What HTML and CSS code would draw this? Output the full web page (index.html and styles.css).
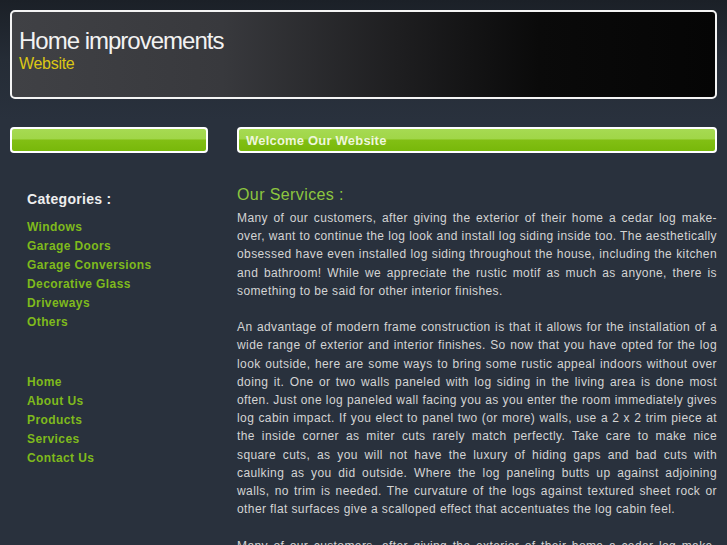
FILE: index.html
```
<!DOCTYPE html>
<html>
<head>
<meta charset="utf-8">
<link rel="stylesheet" href="styles.css">
</head>
<body>
<div class="page">
  <header class="header">
    <h1 class="title">Home improvements</h1>
    <div class="subtitle">Website</div>
  </header>
  <div class="columns">
    <aside class="sidebar">
      <div class="bar"></div>
      <h3 class="cat-title">Categories :</h3>
      <ul class="links">
        <li><a href="#">Windows</a></li>
        <li><a href="#">Garage Doors</a></li>
        <li><a href="#">Garage Conversions</a></li>
        <li><a href="#">Decorative Glass</a></li>
        <li><a href="#">Driveways</a></li>
        <li><a href="#">Others</a></li>
      </ul>
      <ul class="links nav">
        <li><a href="#">Home</a></li>
        <li><a href="#">About Us</a></li>
        <li><a href="#">Products</a></li>
        <li><a href="#">Services</a></li>
        <li><a href="#">Contact Us</a></li>
      </ul>
    </aside>
    <main class="main">
      <div class="bar"><span class="bar-text">Welcome Our Website</span></div>
      <h2 class="section-title">Our Services :</h2>
      <p>Many of our customers, after giving the exterior of their home a cedar log make-over, want to continue the log look and install log siding inside too. The aesthetically obsessed have even installed log siding throughout the house, including the kitchen and bathroom! While we appreciate the rustic motif as much as anyone, there is something to be said for other interior finishes.</p>
      <p>An advantage of modern frame construction is that it allows for the installation of a wide range of exterior and interior finishes. So now that you have opted for the log look outside, here are some ways to bring some rustic appeal indoors without over doing it. One or two walls paneled with log siding in the living area is done most often. Just one log paneled wall facing you as you enter the room immediately gives log cabin impact. If you elect to panel two (or more) walls, use a 2 x 2 trim piece at the inside corner as miter cuts rarely match perfectly. Take care to make nice square cuts, as you will not have the luxury of hiding gaps and bad cuts with caulking as you did outside. Where the log paneling butts up against adjoining walls, no trim is needed. The curvature of the logs against textured sheet rock or other flat surfaces give a scalloped effect that accentuates the log cabin feel.</p>
      <p>Many of our customers, after giving the exterior of their home a cedar log make-over, want to continue the log look and install log siding inside too. The aesthetically obsessed have even installed log siding throughout the house, including the kitchen and bathroom!</p>
    </main>
  </div>
</div>
</body>
</html>
```
FILE: styles.css
```
html, body {
  margin: 0;
  padding: 0;
}
body {
  background: linear-gradient(to bottom, #1b2027 0px, #252c36 60px, #29313d 120px, #29313d 100%);
  font-family: "Liberation Sans", Arial, sans-serif;
  color: #d2d2d2;
  height: 545px;
  overflow: hidden;
}
.page {
  padding: 10px 10px 0 10px;
}
.header {
  height: 85px;
  border: 2px solid #f4f4f4;
  border-radius: 5px;
  background: linear-gradient(to right, #404145 0%, #38393d 30%, #1e1e20 55%, #0a0a0a 75%, #050505 100%);
  padding: 0 0 0 7px;
  box-sizing: content-box;
}
.title {
  margin: 0;
  padding-top: 15px;
  font-size: 24px;
  font-weight: normal;
  letter-spacing: -1px;
  line-height: 28px;
  color: #f2f2f2;
}
.subtitle {
  font-size: 16px;
  line-height: 18px;
  color: #dcc715;
  letter-spacing: -0.3px;
}
.columns {
  display: flex;
  gap: 29px;
  margin-top: 28px;
}
.sidebar {
  width: 198px;
  flex: none;
}
.main {
  width: 480px;
  flex: none;
}
.bar {
  height: 22px;
  border: 2px solid #ffffff;
  border-radius: 4px;
  background: linear-gradient(to bottom, #a6da52 0%, #a0d648 45%, #82bf14 50%, #78b80a 100%);
  display: flex;
  align-items: center;
}
.bar-text {
  font-weight: bold;
  font-size: 13px;
  color: #eef6dc;
  padding-left: 7px;
  letter-spacing: 0.2px;
}
.cat-title {
  margin: 38px 0 0 17px;
  font-size: 14px;
  line-height: 16px;
  color: #eeeeee;
  font-weight: bold;
  letter-spacing: 0.3px;
}
.links {
  list-style: none;
  margin: 9px 0 0 17px;
  padding: 0;
}
.links li {
  height: 19px;
  line-height: 19px;
}
.links a {
  color: #7fba1c;
  font-weight: bold;
  font-size: 12px;
  text-decoration: none;
  letter-spacing: 0.4px;
}
.links.nav {
  margin-top: 41px;
}
.section-title {
  margin: 32px 0 4px 0;
  font-size: 16px;
  font-weight: normal;
  line-height: 20px;
  color: #8dc63f;
  letter-spacing: 0.4px;
}
.main p {
  margin: 0 0 18.2px 0;
  font-size: 12px;
  line-height: 18.2px;
  letter-spacing: 0.4px;
  text-align: justify;
  color: #d4d4d4;
}
```
